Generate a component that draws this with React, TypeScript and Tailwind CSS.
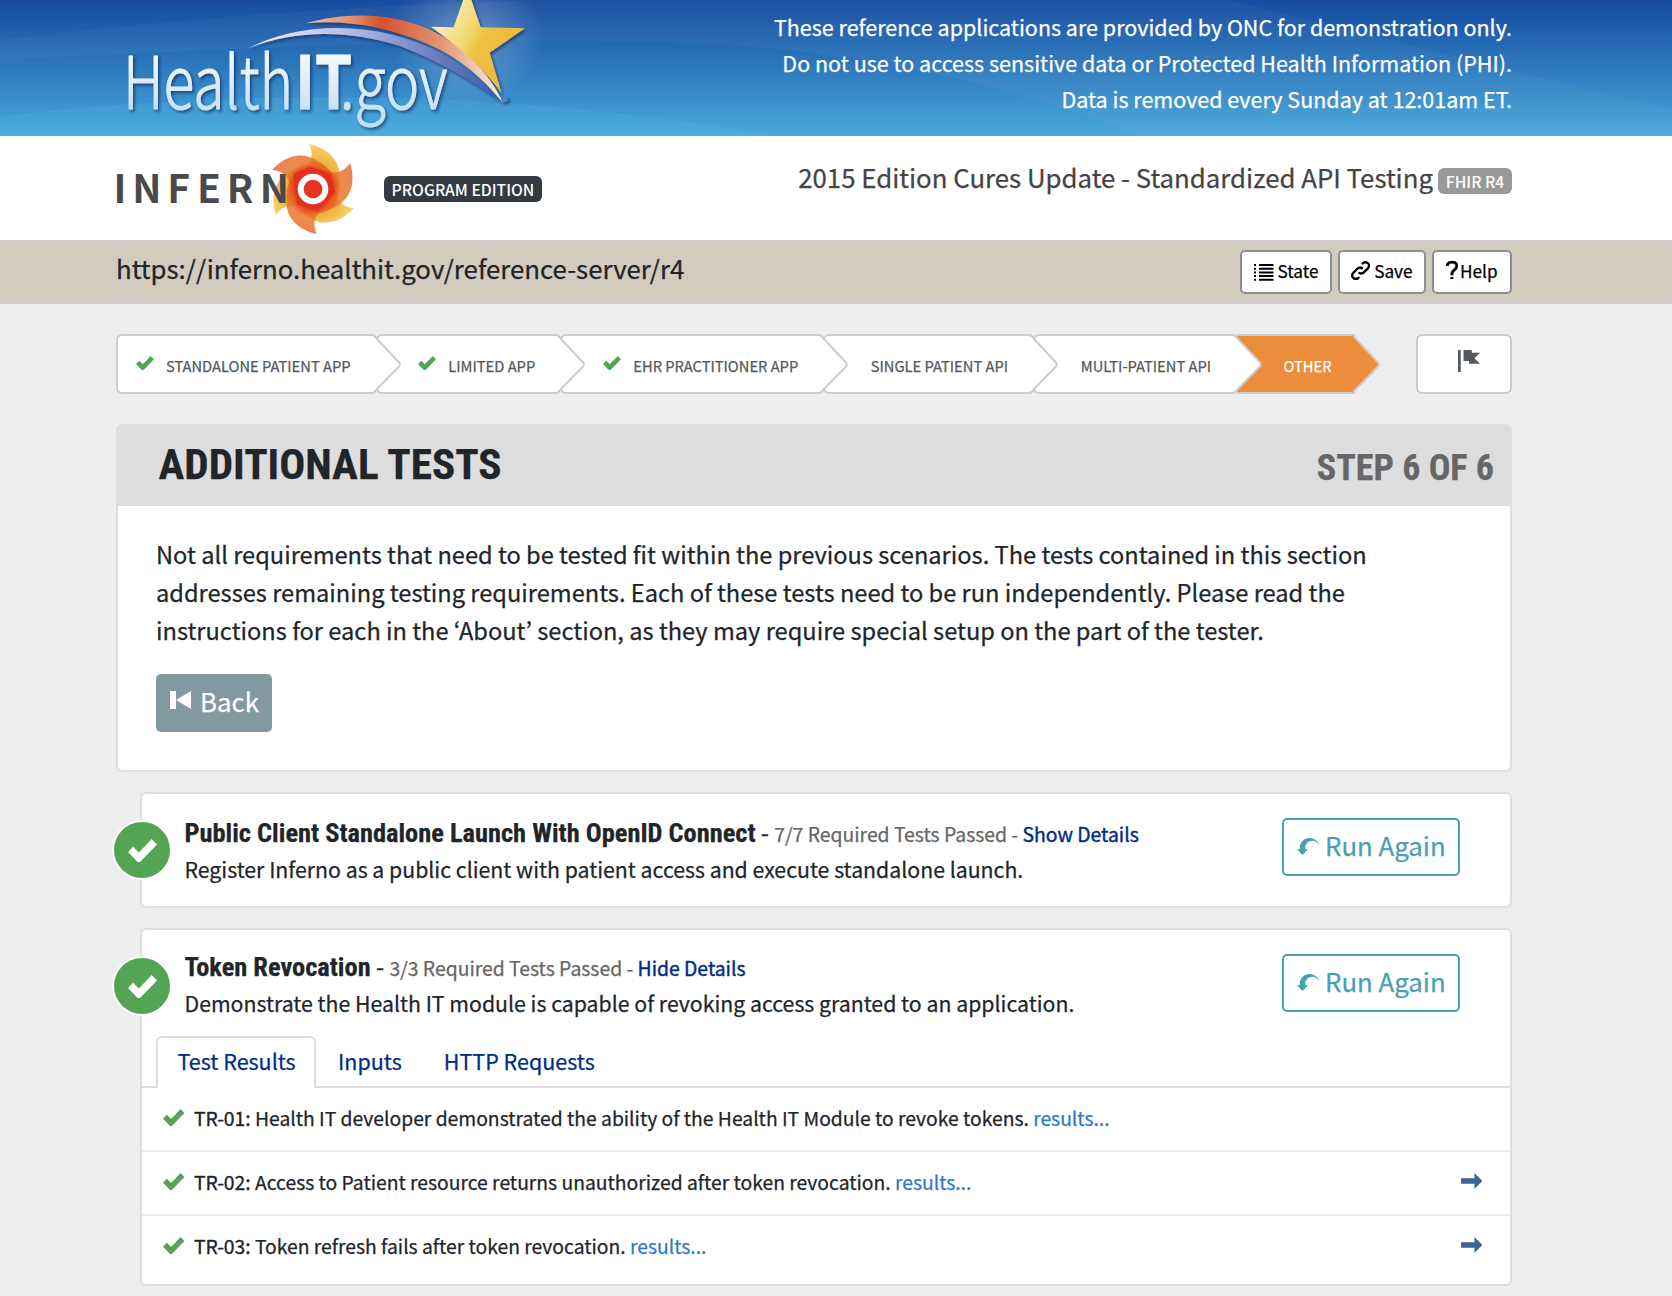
import type { ReactNode } from "react";

const CHECK =
  "M6.41 0l-.69.72-2.78 2.78-.81-.78-.72-.72-1.41 1.41.72.72 1.5 1.5.69.72.72-.72 3.5-3.5.72-.72-1.44-1.41z";
const ARROW = "M5 0v2h-5v2h5v2l3-3.03-3-2.97z";
const STEP_BACK = "M0 0v6h2v-6h-2zm2 3l5 3v-6l-5 3z";
const FLAG = "M0 0v8h1v-8h-1zm2 0v4h2v1h4l-2-1.97 2-2.03h-3v-1h-3z";
const UNDO =
  "M4.5 0c-1.93 0-3.5 1.57-3.5 3.5v.5h-1l2 2 2-2h-1v-.5c0-1.38 1.12-2.5 2.5-2.5 1.1 0 2.1.6 2.5 1.6-.3-1.5-1.7-2.6-3.5-2.6z";
const LINK =
  "M5.88.03c-.18.01-.36.03-.53.09-.27.1-.53.25-.75.47a.5.5 0 1 0 .69.69c.11-.11.24-.17.38-.22.35-.12.78-.07 1.06.22.39.39.39 1.04 0 1.44l-1.5 1.5c-.44.44-.8.48-1.06.47-.26-.01-.41-.13-.41-.13a.5.5 0 1 0-.5.88s.34.22.84.25c.5.03 1.2-.16 1.81-.78l1.5-1.5c.78-.78.78-2.04 0-2.81-.28-.28-.61-.45-.97-.53-.18-.04-.38-.04-.56-.03zm-2 2.31c-.5-.02-1.19.15-1.78.75l-1.5 1.5c-.78.78-.78 2.04 0 2.81.56.56 1.36.72 2.06.47.27-.1.53-.25.75-.47a.5.5 0 1 0-.69-.69c-.11.11-.24.17-.38.22-.35.12-.78.07-1.06-.22-.39-.39-.39-1.04 0-1.44l1.5-1.5c.4-.4.75-.45 1.03-.44.28.01.47.09.47.09a.5.5 0 1 0 .44-.88s-.34-.2-.84-.22z";
const QUESTION =
  "M2.47 0c-.85 0-1.48.26-1.88.66-.4.4-.54.9-.59 1.28l1 .13c.04-.25.12-.5.31-.69.19-.19.49-.38 1.16-.38.66 0 1.02.16 1.22.34.2.18.28.4.28.66 0 .83-.34 1.06-.84 1.5-.5.44-1.16 1.08-1.16 2.25v.25h1v-.25c0-.83.31-1.06.81-1.5.5-.44 1.19-1.08 1.19-2.25 0-.48-.17-1.02-.59-1.41-.43-.39-1.07-.59-1.91-.59zm-.5 7v1h1v-1h-1z";

function Icon({ d, box, className }: { d: string; box: string; className: string }) {
  return (
    <svg viewBox={box} preserveAspectRatio="none" className={`block shrink-0 fill-current ${className}`}>
      <path d={d} />
    </svg>
  );
}

function HealthITLogo() {
  return (
    <svg viewBox="0 0 1380 408" className="block h-[136px] w-[460px] overflow-visible">
      <defs>
        <linearGradient id="word" x1="0" y1="170" x2="0" y2="340" gradientUnits="userSpaceOnUse">
          <stop offset="0" stopColor="#f2f8fd" />
          <stop offset="1" stopColor="#c5e0f2" />
        </linearGradient>
        <linearGradient id="red" x1="617" y1="0" x2="1210" y2="0" gradientUnits="userSpaceOnUse">
          <stop offset="0" stopColor="#f0c6ad" />
          <stop offset="0.25" stopColor="#e08a66" />
          <stop offset="0.38" stopColor="#d4502f" />
          <stop offset="0.65" stopColor="#e08d68" />
          <stop offset="1" stopColor="#fbeee8" />
        </linearGradient>
        <linearGradient id="violet" x1="443" y1="0" x2="1200" y2="0" gradientUnits="userSpaceOnUse">
          <stop offset="0" stopColor="#f4f4fb" />
          <stop offset="0.4" stopColor="#b4bce4" />
          <stop offset="0.75" stopColor="#6a7cc2" />
          <stop offset="1" stopColor="#3c5bb0" />
        </linearGradient>
        <linearGradient id="gold" x1="1020" y1="60" x2="1180" y2="150" gradientUnits="userSpaceOnUse">
          <stop offset="0" stopColor="#f9efbd" />
          <stop offset="0.55" stopColor="#f2d668" />
          <stop offset="0.75" stopColor="#eec33f" />
          <stop offset="1" stopColor="#edbd3f" />
        </linearGradient>
        <radialGradient id="glow">
          <stop offset="0" stopColor="#ffffff" stopOpacity="0.3" />
          <stop offset="1" stopColor="#ffffff" stopOpacity="0" />
        </radialGradient>
        <filter id="shade" x="-10%" y="-20%" width="120%" height="150%">
          <feDropShadow dx="5" dy="6" stdDeviation="4" floodColor="#0d2f5e" floodOpacity="0.75" />
        </filter>
      </defs>
      <ellipse cx="1100" cy="110" rx="230" ry="210" fill="url(#glow)" />
      <g filter="url(#shade)">
        <path d="M443 146C560 85 720 65 880 105C1010 138 1110 205 1203 303C1110 240 1020 185 900 138C740 90 590 88 443 146Z" fill="url(#violet)" />
        <path d="M617 70C740 35 870 38 980 85C1090 135 1165 215 1210 310C1150 235 1080 175 990 135C860 78 730 58 617 70Z" fill="url(#red)" />
        <path d="M993 80L1061 82L1102 -36L1142 82L1275 85L1169 158L1205 280C1160 215 1090 150 993 80Z" fill="url(#gold)" />
        <circle cx="1214" cy="297" r="10" fill="#4f7fc4" />
      </g>
      <g filter="url(#shade)" fill="url(#word)" stroke="url(#word)" strokeWidth="3">
        <text y="328" fontSize="217" fontFamily="Noto Sans CJK KR" fontWeight="300">
          <tspan x="69" textLength="510" lengthAdjust="spacingAndGlyphs">Health</tspan>
          <tspan x="586" textLength="170" lengthAdjust="spacingAndGlyphs" fontWeight="700">IT</tspan>
          <tspan x="720" textLength="322" lengthAdjust="spacingAndGlyphs">.gov</tspan>
        </text>
      </g>
    </svg>
  );
}

const BLADE = "M-11 -135C38 -124 80 -92 80 -38C80 10 70 40 40 62L-40 0L-50 -30C-45 -45 -38 -58 -22 -68C-2 -82 0 -108 -11 -135Z";

function InfernoLogo() {
  return (
    <svg viewBox="0 0 720 312" className="block h-[104px] w-[240px] overflow-visible">
      <defs>
        <radialGradient id="flame" cx="0" cy="0" r="135" gradientUnits="userSpaceOnUse">
          <stop offset="0.45" stopColor="#e5481f" />
          <stop offset="0.65" stopColor="#e9792d" />
          <stop offset="1" stopColor="#e56a35" />
        </radialGradient>
        <radialGradient id="sun" cx="0" cy="0" r="135" gradientUnits="userSpaceOnUse">
          <stop offset="0.4" stopColor="#ee9a2e" />
          <stop offset="0.7" stopColor="#f1bb49" />
          <stop offset="1" stopColor="#f5d670" />
        </radialGradient>
      </defs>
      <g transform="translate(591 159)">
        <g fill="url(#sun)">
          <path d={BLADE} />
          <path d={BLADE} transform="rotate(120)" />
          <path d={BLADE} transform="rotate(240)" />
        </g>
        <g fill="url(#flame)" fillOpacity="0.85">
          <path d={BLADE} transform="rotate(60)" />
          <path d={BLADE} transform="rotate(180)" />
          <path d={BLADE} transform="rotate(300)" />
        </g>
        <path d="M-58 -44L-10 -66L52 -44L66 10L12 66L-48 46Z" fill="#e2301f" fillOpacity="0.92" stroke="#e2301f" strokeOpacity="0.4" strokeWidth="6" strokeLinejoin="round" />
        <circle r="37" fill="#e5341f" stroke="#fff" strokeWidth="18" />
      </g>
      <text x="-7.5 49 154 243 332 431.5" y="200" fontSize="117" fontWeight="700" fontFamily="Noto Sans CJK KR" fill="#4a4a4a">
        INFERN
      </text>
    </svg>
  );
}

function ToolButton({ icon, label, className }: { icon: ReactNode; label: string; className: string }) {
  return (
    <button className={`flex h-11 items-center rounded-[5px] border-2 border-[#868e96] bg-white text-[17.2px] leading-[26px] text-black ${className}`}>
      {icon}
      <span className="-mt-[2px]">{label}</span>
    </button>
  );
}

function Step({ label, done, active, className }: { label: string; done?: boolean; active?: boolean; className: string }) {
  return (
    <div
      className={`relative flex h-[60px] shrink-0 items-center border-y-2 border-[#ccc] text-[14.7px] ${
        active ? "bg-[#eb8d3a] text-white" : "rounded-[6px] border-l-2 bg-white text-[#54595e]"
      } ${className}`}
    >
      {done && <Icon d={CHECK} box="0 0 7.85 6" className="mr-[12px] -mt-[3px] h-[14px] w-[18px] text-[#54a553]" />}
      <span className="relative z-20 mt-[4px] whitespace-nowrap">{label}</span>
      <svg viewBox="0 0 34 60" className="absolute -top-[2px] -right-[25px] z-10 h-[60px] w-[34px]">
        <path d="M0 2.5H7L9 4.5L31.5 28Q33.4 30.5 31.5 33L9 56L7 57.5H0Z" className={active ? "fill-[#eb8d3a]" : "fill-white"} />
        <path d="M0 1H5Q8 1 9 4L32 28.5Q33.5 30.5 32 32.5L9 56Q8 59 5 59H0" fill="none" stroke="#ccc" strokeWidth="2" />
      </svg>
    </div>
  );
}

function TestCard({ title, status, toggle, text, offset, className, children }: {
  title: string; status: string; toggle: string; text: string; offset: string; className: string; children?: ReactNode;
}) {
  return (
    <section className={`relative ml-6 rounded-[6px] border-2 border-[#ddd] bg-white ${className}`}>
      <div className="absolute top-[26px] -left-[30px] flex size-[60px] items-center justify-center rounded-full border-2 border-white bg-[#54a553] text-white">
        <Icon d={CHECK} box="0 0 7.85 6" className="h-[23px] w-[29px]" />
      </div>
      <div className="flex justify-between pr-[50px] pl-[42.5px]">
        <div className={offset}>
          <h3 className="-mt-px mb-px flex h-[36px] items-baseline whitespace-pre leading-[36px]">
            <span className="font-['Roboto_Condensed'] text-[26.4px] font-bold">{title}</span>
            <span className="text-[23.6px]"> - </span>
            <span className="text-[19.36px] text-[#666]">{status} - </span>
            <a className="text-[19.36px] text-[#002d85] [-webkit-text-stroke:0.4px]">{toggle}</a>
          </h3>
          <p className="text-[21.28px] leading-[36px]">{text}</p>
        </div>
        <button className="mt-6 flex h-[58px] w-[178px] items-center rounded-[5px] border-2 border-[#48a0b4] pl-[13px] text-[25.8px] leading-none text-[#48a0b4]">
          <Icon d={UNDO} box="0 0 8 6" className="-mt-px mr-[6px] h-[17px] w-[22px]" />
          <span className="-mt-[4px] whitespace-nowrap">Run Again</span>
        </button>
      </div>
      {children}
    </section>
  );
}

function ResultRow({ id, text, arrow, last }: { id: string; text: string; arrow?: boolean; last?: boolean }) {
  return (
    <li className={`flex items-center pr-[28px] pb-[2px] pl-[21px] ${last ? "h-[62px]" : "h-16 border-b-2 border-[#eee]"}`}>
      <Icon d={CHECK} box="0 0 7.85 6" className="mr-[9.5px] -mt-px h-[17px] w-[21.5px] text-[#54a553]" />
      <span className="whitespace-pre text-[19.31px] leading-[30px]">
        <span className="[-webkit-text-stroke:0.35px]">{id}:</span> {text} <a className="text-[#3079c8]">results...</a>
      </span>
      {arrow && <Icon d={ARROW} box="0 0 8 6" className="-mt-[2px] ml-auto h-[16px] w-[21.5px] text-[#3f6699]" />}
    </li>
  );
}

export default function App() {
  return (
    <div className="h-[1296px] w-[1672px] overflow-hidden bg-[#eee] font-['Noto_Sans_CJK_KR',sans-serif] text-[#212529] [-webkit-text-stroke:0.25px]">
      <header className="relative flex h-[136px] justify-between bg-linear-to-b from-[#184b9f] to-[#49a8dc] pr-[160px] pl-[100px]">
        <svg viewBox="0 0 1672 136" className="absolute inset-0 h-full w-full">
          <path d="M0 40Q420 -10 800 0H1230L1672 110V136H1140Q950 60 740 46T0 60Z" fill="#fff" fillOpacity="0.035" />
          <path d="M0 116Q400 70 780 136H0Z" fill="#5fc8ee" fillOpacity="0.16" />
        </svg>
        <div className="relative">
          <HealthITLogo />
        </div>
        <p className="relative pt-[9px] text-right text-[21.5px] leading-9 text-white">
          These reference applications are provided by ONC for demonstration only.
          <br />
          Do not use to access sensitive data or Protected Health Information (PHI).
          <br />
          Data is removed every Sunday at 12:01am ET.
        </p>
      </header>

      <div className="flex h-[104px] bg-white pr-[160px] pl-[116px]">
        <InfernoLogo />
        <span className="mt-10 ml-7 flex h-[26px] w-[158px] items-center justify-center rounded-[6px] bg-[#343a40] pt-[2px] text-[15.7px] font-medium whitespace-nowrap text-white [-webkit-text-stroke:0px]">
          PROGRAM EDITION
        </span>
        <div className="ml-auto flex text-[25.8px] whitespace-nowrap text-[#444]">
          <span className="mt-[22px] leading-[38px]">2015 Edition Cures Update - Standardized API Testing</span>
          <span className="mt-8 ml-[5px] flex h-[26px] w-[74px] items-center justify-center rounded-[6px] bg-[#999] pt-[2px] text-[15.7px] font-medium text-white [-webkit-text-stroke:0px]">
            FHIR R4
          </span>
        </div>
      </div>

      <div className="flex h-16 justify-between border-y-2 border-[#ccc] bg-[#d2cbbf] pr-[160px] pl-[116px]">
        <span className="mt-[7px] text-[25.8px] leading-[38px]">https://inferno.healthit.gov/reference-server/r4</span>
        <div className="mt-2 flex gap-[6px]">
          <ToolButton
            className="w-[92px] pl-[12px]"
            label="State"
            icon={
              <Icon
                className="mr-[4px] h-[17px] w-[19.5px]"
                box="0 0 19.5 17"
                d="M0 0h2v2h-2zM5 0h14.5v2h-14.5zM0 3.7h2v2h-2zM5 3.7h14.5v2h-14.5zM0 7.4h2v2h-2zM5 7.4h14.5v2h-14.5zM0 11.1h2v2h-2zM5 11.1h14.5v2h-14.5zM0 14.8h2v2h-2zM5 14.8h14.5v2h-14.5z"
              />
            }
          />
          <ToolButton className="w-[88px] pl-[11px]" label="Save" icon={<Icon d={LINK} box="0 0 8 8" className="-mt-[3px] mr-[4px] size-[19.2px]" />} />
          <ToolButton
            className="w-[80px] pl-[12px]"
            label="Help"
            icon={<Icon d={QUESTION} box="0 0 5 8" className="-mt-[4px] mr-[2px] h-[18.5px] w-[12px] stroke-current [stroke-width:0.25]" />}
          />
        </div>
      </div>

      <main className="pr-[160px] pl-[116px]">
        <div className="mt-[30px] flex h-[60px]">
          <Step label="STANDALONE PATIENT APP" done className="w-[260.3px] pl-[18px]" />
          <Step label="LIMITED APP" done className="w-[184px] pl-[40px]" />
          <Step label="EHR PRACTITIONER APP" done className="w-[263px] pl-[41px]" />
          <Step label="SINGLE PATIENT API" className="w-[210px] pl-[45.5px]" />
          <Step label="MULTI-PATIENT API" className="w-[203.7px] pl-[45.5px]" />
          <Step label="OTHER" active className="w-[118px] pl-[46.5px]" />
          <button className="ml-auto flex h-[60px] w-[96px] justify-center rounded-[6px] border-2 border-[#ccc] bg-white pt-[14px] pl-[10px] text-[#54595e]">
            <Icon d={FLAG} box="0 0 8 8" className="size-[22px]" />
          </button>
        </div>

        <section className="mt-[30px] h-[348px] rounded-[6px] border-2 border-[#ddd] bg-white">
          <div className="flex h-[80px] justify-between bg-[#ddd] pr-[16px] pl-[40.5px] font-['Roboto_Condensed'] font-bold">
            <h1 className="text-[43.2px] leading-[78px]">ADDITIONAL TESTS</h1>
            <h2 className="pt-[3px] text-[36px] leading-[78px] text-[#666]">STEP 6 OF 6</h2>
          </div>
          <p className="mt-[29px] ml-[38px] text-[23.64px] leading-[38px] whitespace-nowrap">
            Not all requirements that need to be tested fit within the previous scenarios. The tests contained in this section
            <br />
            addresses remaining testing requirements. Each of these tests need to be run independently. Please read the
            <br />
            instructions for each in the ‘About’ section, as they may require special setup on the part of the tester.
          </p>
          <button className="mt-[25px] ml-[38px] flex h-[58px] w-[116px] items-center rounded-[5px] bg-[#81999f] pl-[14px] text-[25.8px] leading-none text-white">
            <Icon d={STEP_BACK} box="0 0 7 6" className="-mt-[6px] mr-[9px] h-[18px] w-[21px]" />
            <span className="-mt-[5px]">Back</span>
          </button>
        </section>

        <TestCard
          className="mt-5 h-[116px]"
          title="Public Client Standalone Launch With OpenID Connect"
          status="7/7 Required Tests Passed"
          toggle="Show Details"
          text="Register Inferno as a public client with patient access and execute standalone launch."
          offset="pt-[21px]"
        />
        <TestCard
          className="mt-5 h-[358px]"
          title="Token Revocation"
          status="3/3 Required Tests Passed"
          toggle="Hide Details"
          text="Demonstrate the Health IT module is capable of revoking access granted to an application."
          offset="h-[106px] pt-[19px]"
        >
          <nav className="flex h-[52px] border-b-2 border-[#ddd] pl-[14px] text-[21.5px] leading-[46px] text-[#002d85]">
            <a className="h-[52px] w-[160px] rounded-t-[6px] border-2 border-b-0 border-[#ddd] bg-white pl-[19.5px]">Test Results</a>
            <a className="pt-[2px] pl-[22px]">Inputs</a>
            <a className="pt-[2px] pl-[42px]">HTTP Requests</a>
          </nav>
          <ul>
            <ResultRow id="TR-01" text="Health IT developer demonstrated the ability of the Health IT Module to revoke tokens." />
            <ResultRow id="TR-02" text="Access to Patient resource returns unauthorized after token revocation." arrow />
            <ResultRow id="TR-03" text="Token refresh fails after token revocation." arrow last />
          </ul>
        </TestCard>
      </main>
    </div>
  );
}
